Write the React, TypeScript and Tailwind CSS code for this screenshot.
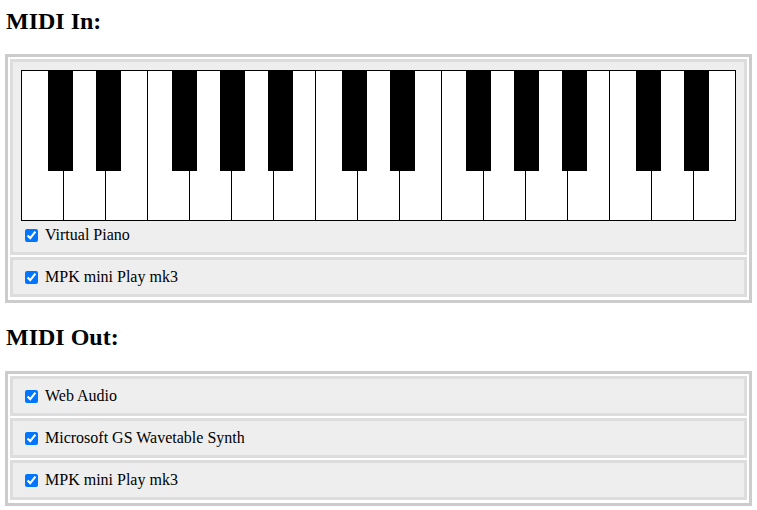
import React from "react";

const WHITE_KEYS = 17;
const KEY_W = 42;
// left edge of each black key, measured from the keyboard's left edge
const BLACK_KEYS = [27, 75, 151, 199, 247, 321, 369, 445, 493, 541, 615, 663];

function Piano() {
  const width = WHITE_KEYS * KEY_W + 1;
  const height = 151;
  return (
    <svg width={width} height={height} className="block" shapeRendering="crispEdges">
      <rect x={0} y={0} width={width} height={height} fill="#fff" />
      {Array.from({ length: WHITE_KEYS - 1 }, (_, i) => (
        <line
          key={i}
          x1={(i + 1) * KEY_W + 0.5}
          x2={(i + 1) * KEY_W + 0.5}
          y1={0}
          y2={height}
          stroke="#000"
          strokeWidth={1}
        />
      ))}
      <rect x={0.5} y={0.5} width={width - 1} height={height - 1} fill="none" stroke="#000" strokeWidth={1} />
      {BLACK_KEYS.map((x) => (
        <rect key={x} x={x} y={0} width={25} height={101} fill="#000" />
      ))}
    </svg>
  );
}

function DeviceRow({ name }: { name: string }) {
  return (
    <label className="flex items-start h-[18px] leading-[18px] text-[16px]">
      <input type="checkbox" defaultChecked className="w-[13px] h-[13px] mt-[3px] ml-[4px] mr-[3px]" />
      <span className="ml-[4px] whitespace-nowrap">{name}</span>
    </label>
  );
}

function Item({ children }: { children: React.ReactNode }) {
  return <div className="border-[3px] border-[#ddd] bg-[#eee] p-[8px]">{children}</div>;
}

function Group({ children }: { children: React.ReactNode }) {
  return <div className="border-[3px] border-[#ccc] p-[2px] pb-[3px] flex flex-col gap-[2px]">{children}</div>;
}

export default function App() {
  return (
    <div className="min-h-screen bg-white text-black px-[5px] pb-[5px] font-['Liberation_Serif','Times_New_Roman',serif]">
      <h2 className="text-[24px] font-bold leading-[27px] pt-[8px] mb-[19px] pl-[1px]">MIDI In:</h2>
      <Group>
        <Item>
          <Piano />
          <div className="mt-[5px]">
            <DeviceRow name="Virtual Piano" />
          </div>
        </Item>
        <Item>
          <DeviceRow name="MPK mini Play mk3" />
        </Item>
      </Group>

      <h2 className="text-[24px] font-bold leading-[27px] mt-[21px] mb-[20px] pl-[1px]">MIDI Out:</h2>
      <Group>
        <Item>
          <DeviceRow name="Web Audio" />
        </Item>
        <Item>
          <DeviceRow name="Microsoft GS Wavetable Synth" />
        </Item>
        <Item>
          <DeviceRow name="MPK mini Play mk3" />
        </Item>
      </Group>
    </div>
  );
}
